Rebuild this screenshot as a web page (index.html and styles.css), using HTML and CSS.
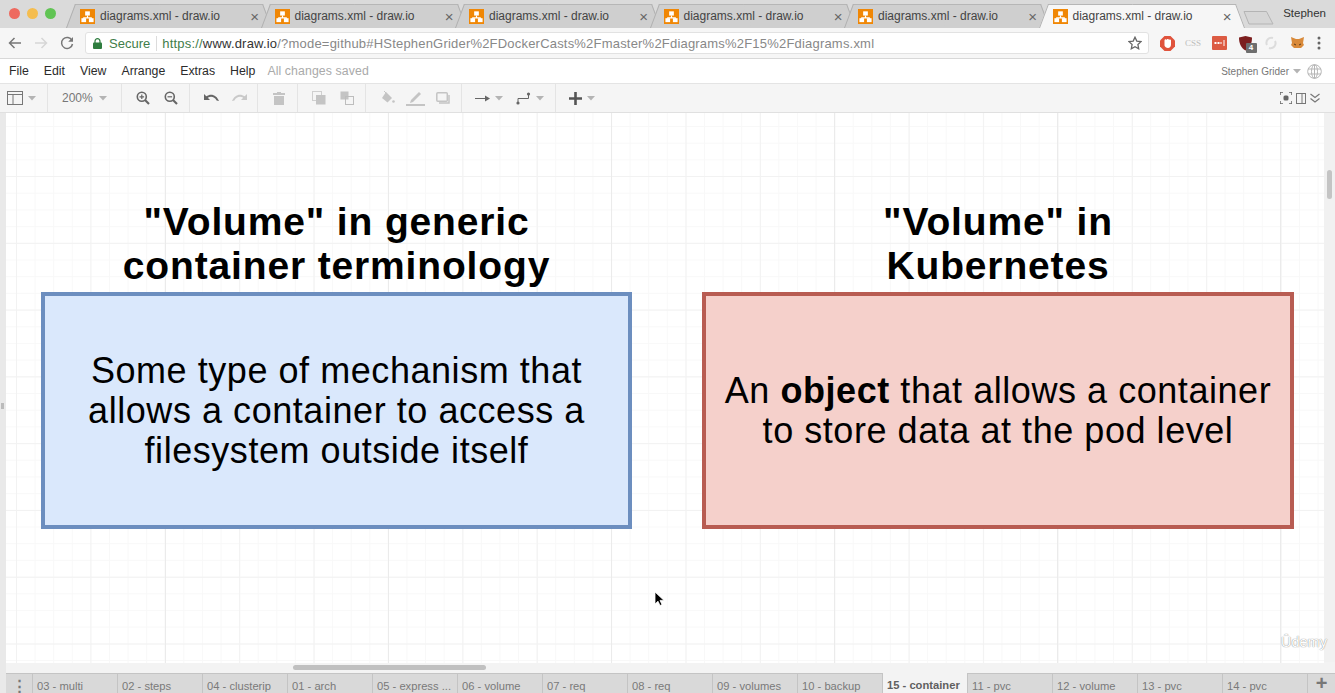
FILE: index.html
```html
<!DOCTYPE html>
<html lang="en">
<head>
  <meta charset="UTF-8" />
  <title>diagrams.xml - draw.io</title>
  <link rel="stylesheet" href="styles.css">
</head>
<body>

  <svg class="defs" width="0" height="0">
    <symbol id="logo" viewBox="0 0 16 16">
      <rect width="16" height="16" fill="#f08705"/>
      <path d="M8 7v2.500M4 11V9.500h8V11" fill="none" stroke="#fff" stroke-width="1.200"/>
      <rect x="5.500" y="2.500" width="5" height="4.500" fill="#fff"/>
      <rect x="1.500" y="9.800" width="5" height="4.200" fill="#fff"/>
      <rect x="9.500" y="9.800" width="5" height="4.200" fill="#fff"/>
    </symbol>
    <symbol id="caret" viewBox="0 0 8 5">
      <path d="M0 0h8L4 4.500z" fill="#b4b4b4"/>
    </symbol>
  </svg>

  <div class="tabstrip">
    <div class="traffic">
      <span class="light light-red"></span>
      <span class="light light-yellow"></span>
      <span class="light light-green"></span>
    </div>
    <div class="tab"><svg class="favicon"><use href="#logo"/></svg><span class="tab-title">diagrams.xml - draw.io</span><span class="tab-close">×</span></div>
    <div class="tab"><svg class="favicon"><use href="#logo"/></svg><span class="tab-title">diagrams.xml - draw.io</span><span class="tab-close">×</span></div>
    <div class="tab"><svg class="favicon"><use href="#logo"/></svg><span class="tab-title">diagrams.xml - draw.io</span><span class="tab-close">×</span></div>
    <div class="tab"><svg class="favicon"><use href="#logo"/></svg><span class="tab-title">diagrams.xml - draw.io</span><span class="tab-close">×</span></div>
    <div class="tab"><svg class="favicon"><use href="#logo"/></svg><span class="tab-title">diagrams.xml - draw.io</span><span class="tab-close">×</span></div>
    <div class="tab tab-active"><svg class="favicon"><use href="#logo"/></svg><span class="tab-title">diagrams.xml - draw.io</span><span class="tab-close">×</span></div>
    <svg class="newtab" width="32" height="15" viewBox="0 0 32 15"><path d="M1 1.500h22.500l6.500 12.500H6z" fill="#d6d6d6" stroke="#b4b4b4"/></svg>
    <span class="profile">Stephen</span>
  </div>

  <div class="navbar">
    <div class="nav-buttons">
      <svg width="14" height="12" viewBox="0 0 14 12"><path d="M13 6H2M6.500 1L1.500 6l5 5" fill="none" stroke="#777" stroke-width="1.500"/></svg>
      <svg width="14" height="12" viewBox="0 0 14 12"><path d="M1 6h11M7.500 1l5 5-5 5" fill="none" stroke="#d6d6d6" stroke-width="1.500"/></svg>
      <svg width="14" height="14" viewBox="0 0 14 14"><path d="M12 4.500A5.500 5.500 0 1 0 12.500 8" fill="none" stroke="#777" stroke-width="1.500"/><path d="M13 1v4.800H8.200z" fill="#777"/></svg>
    </div>
    <div class="address">
      <svg class="lock" width="9" height="11" viewBox="0 0 9 11"><path d="M2 5V3.200a2.500 2.500 0 0 1 5 0V5" fill="none" stroke="#2f7d3f" stroke-width="1.200"/><rect y="4.500" width="9" height="6.500" rx="1" fill="#2f7d3f"/></svg>
      <span class="secure">Secure</span>
      <span class="url"><span class="url-scheme">https://</span><span class="url-host">www.draw.io</span>/?mode=github#HStephenGrider%2FDockerCasts%2Fmaster%2Fdiagrams%2F15%2Fdiagrams.xml</span>
      <svg class="star" width="14" height="14" viewBox="0 0 14 14"><path d="M7 1.200l1.800 3.900 4.200.5-3.100 2.900.8 4.200L7 10.700l-3.700 2 .8-4.200L1 5.600l4.200-.5z" fill="none" stroke="#666" stroke-width="1.300"/></svg>
    </div>
    <div class="extensions">
      <svg width="15" height="15" viewBox="0 0 15 15"><path d="M4.500 0h6L15 4.500v6L10.500 15h-6L0 10.500v-6z" fill="#e0533c"/><path d="M4.500 4.500c0-1.500 2-1.500 2-.5 0-1.500 2.500-1.500 2.500 0 .5-.8 2-.5 2 .5v4c0 2-1.200 3.500-3 3.500S5 11 4.500 9.500z" fill="#fff"/></svg>
      <span class="ext-css">CSS</span>
      <svg width="15" height="14" viewBox="0 0 15 14"><rect width="15" height="14" rx="1" fill="#dc5b43"/><path d="M2.500 7h7" stroke="#fff" stroke-width="2" stroke-dasharray="2 1"/><path d="M12 4v6" stroke="#fff"/></svg>
      <span class="ext-shield">
        <svg width="13" height="15" viewBox="0 0 13 15"><path d="M0 1.500L6.500 0 13 1.500c0 6-2 10.500-6.500 13C2 12 0 7.500 0 1.500z" fill="#7c1f1f"/></svg>
        <span class="ext-badge">4</span>
      </span>
      <svg width="14" height="14" viewBox="0 0 14 14"><path d="M9 2a5 5 0 0 0-6 7M5 12a5 5 0 0 0 6-7" fill="none" stroke="#dcdcdc" stroke-width="2"/></svg>
      <svg width="13" height="12" viewBox="0 0 13 12"><path d="M0 0l5 2h3l5-2-1 6 1 2-3 3H3L0 8l1-2z" fill="#d98a3a"/><path d="M3 7l2 1M10 7L8 8" stroke="#5a3a1c"/></svg>
      <svg width="4" height="14" viewBox="0 0 4 14"><circle cx="2" cy="2" r="1.500" fill="#666"/><circle cx="2" cy="7" r="1.500" fill="#666"/><circle cx="2" cy="12" r="1.500" fill="#666"/></svg>
    </div>
  </div>

  <div class="menubar">
    <span class="menu-item">File</span>
    <span class="menu-item">Edit</span>
    <span class="menu-item">View</span>
    <span class="menu-item">Arrange</span>
    <span class="menu-item">Extras</span>
    <span class="menu-item">Help</span>
    <span class="menu-status">All changes saved</span>
    <span class="menu-user">Stephen Grider</span>
    <svg class="user-caret" width="8" height="5"><use href="#caret"/></svg>
    <svg class="globe" width="15" height="15" viewBox="0 0 15 15"><g fill="none" stroke="#b5b5b5"><circle cx="7.500" cy="7.500" r="6.800"/><ellipse cx="7.500" cy="7.500" rx="3" ry="6.800"/><path d="M1 5h13M1 10h13M7.500 1v13"/></g></svg>
  </div>

  <div class="toolbar">
    <div class="tb-group tb-format">
      <svg width="16" height="14" viewBox="0 0 16 14"><rect x=".5" y=".5" width="15" height="13" fill="none" stroke="#777"/><path d="M.5 3.500h15M6 3.500v10" stroke="#777"/></svg>
      <svg class="tb-caret" width="8" height="5"><use href="#caret"/></svg>
    </div>
    <div class="tb-group tb-zoom">
      <span class="zoom-value">200%</span>
      <svg class="tb-caret" width="8" height="5"><use href="#caret"/></svg>
    </div>
    <div class="tb-group">
      <span class="tb-btn"><svg width="14" height="14" viewBox="0 0 14 14"><circle cx="5.800" cy="5.800" r="4.500" fill="none" stroke="#666" stroke-width="1.600"/><path d="M9 9l4 4" stroke="#666" stroke-width="2.200"/><path d="M3.500 5.800h4.600M5.800 3.500v4.600" stroke="#666" stroke-width="1.200"/></svg></span>
      <span class="tb-btn"><svg width="14" height="14" viewBox="0 0 14 14"><circle cx="5.800" cy="5.800" r="4.500" fill="none" stroke="#666" stroke-width="1.600"/><path d="M9 9l4 4" stroke="#666" stroke-width="2.200"/><path d="M3.500 5.800h4.600" stroke="#666" stroke-width="1.200"/></svg></span>
    </div>
    <div class="tb-group">
      <span class="tb-btn"><svg width="15" height="9" viewBox="0 0 15 9"><path d="M0 0v6h6L3.800 3.800C6.800 1.800 10.500 2.600 12.600 6.500L15 7C12.800 1 7 -1.200 2.300 2.300z" fill="#666"/></svg></span>
      <span class="tb-btn"><svg width="15" height="9" viewBox="0 0 15 9"><path d="M15 0v6H9l2.200-2.200C8.200 1.800 4.500 2.600 2.400 6.500L0 7C2.200 1 8-1.200 12.700 2.300z" fill="#c9c9c9"/></svg></span>
    </div>
    <div class="tb-group">
      <span class="tb-btn"><svg width="12" height="13" viewBox="0 0 12 13"><path d="M0 1h4V0h4v1h4v2H0zM1 4h10v9H1z" fill="#c4c4c4"/></svg></span>
    </div>
    <div class="tb-group">
      <span class="tb-btn"><svg width="14" height="14" viewBox="0 0 14 14"><rect x=".5" y=".5" width="9" height="9" fill="none" stroke="#cfcfcf"/><rect x="4" y="4" width="9.500" height="9.500" fill="#c4c4c4"/></svg></span>
      <span class="tb-btn"><svg width="14" height="14" viewBox="0 0 14 14"><rect x=".5" y=".5" width="8" height="8" fill="#c4c4c4"/><rect x="5.500" y="5.500" width="8" height="8" fill="none" stroke="#bdbdbd"/></svg></span>
    </div>
    <div class="tb-group">
      <span class="tb-btn"><svg width="15" height="14" viewBox="0 0 15 14"><path d="M6 1l6 6-4.500 4.500L2 7z" fill="#c4c4c4"/><path d="M4 0l3 3" stroke="#c4c4c4"/><circle cx="13.500" cy="10.500" r="1.300" fill="#c4c4c4"/></svg></span>
      <span class="tb-btn"><svg width="19" height="16" viewBox="0 0 19 16"><path d="M5 10l8-8 2 2-8 8-3 1z" fill="#c4c4c4"/><path d="M0 15h19" stroke="#c4c4c4" stroke-width="2"/></svg></span>
      <span class="tb-btn"><svg width="14" height="12" viewBox="0 0 14 12"><rect x=".8" y=".8" width="10.500" height="8.500" rx="1" fill="none" stroke="#c4c4c4" stroke-width="1.500"/><path d="M13 3v8H3" fill="none" stroke="#c4c4c4" stroke-width="1.500"/></svg></span>
    </div>
    <div class="tb-group tb-lines">
      <svg width="15" height="7" viewBox="0 0 15 7"><path d="M0 3.500h11" stroke="#666"/><path d="M10 .5l5 3-5 3z" fill="#666"/></svg>
      <svg class="tb-caret" width="8" height="5"><use href="#caret"/></svg>
      <svg class="tb-waypoint" width="15" height="13" viewBox="0 0 15 13"><path d="M2 11V6.500h10.500V2" fill="none" stroke="#666"/><circle cx="2" cy="11" r="1.600" fill="#666"/><circle cx="12.500" cy="2" r="1.600" fill="#666"/></svg>
      <svg class="tb-caret" width="8" height="5"><use href="#caret"/></svg>
    </div>
    <div class="tb-group tb-insert">
      <svg width="13" height="13" viewBox="0 0 13 13"><path d="M6.500 0v13M0 6.500h13" stroke="#555" stroke-width="2.600"/></svg>
      <svg class="tb-caret" width="8" height="5"><use href="#caret"/></svg>
    </div>
    <div class="tb-right">
      <svg width="12" height="12" viewBox="0 0 12 12"><path d="M0 3V0h3M9 0h3v3M12 9v3H9M3 12H0V9" fill="none" stroke="#666" stroke-width="1.500"/><rect x="3.500" y="3.500" width="5" height="5" rx="1.500" fill="#666"/></svg>
      <svg width="10" height="11" viewBox="0 0 10 11"><rect x=".5" y=".5" width="9" height="10" fill="none" stroke="#777"/><path d="M6 .5v10" stroke="#777"/></svg>
      <svg width="10" height="10" viewBox="0 0 10 10"><path d="M.5 1l4.500 3.500L9.500 1M.5 5.500L5 9l4.500-3.500" fill="none" stroke="#777" stroke-width="1.200"/></svg>
    </div>
  </div>

  <div class="workspace">
    <div class="gutter"><span class="gutter-handle"></span></div>
    <div class="canvas">
      <h2 class="node-title title-left">"Volume" in generic<br>container terminology</h2>
      <h2 class="node-title title-right">"Volume" in<br>Kubernetes</h2>
      <div class="node node-blue">Some type of mechanism that<br>allows a container to access a<br>filesystem outside itself</div>
      <div class="node node-red"><span>An <b>object</b> that allows a container<br>to store data at the pod level</span></div>
      <svg class="cursor" width="11" height="16" viewBox="0 0 11 16"><path d="M1 1v12l3-2.800 2 4.300 2-.9-2-4.200h4z" fill="#000" stroke="#fff" stroke-width=".8"/></svg>
      <span class="watermark">Ûdemy</span>
    </div>
    <div class="vscroll"><span class="vscroll-thumb"></span></div>
  </div>

  <div class="hscroll"><span class="hscroll-thumb"></span></div>

  <div class="pages">
    <div class="page-menu">⋮</div>
    <div class="page">03 - multi</div>
    <div class="page">02 - steps</div>
    <div class="page">04 - clusterip</div>
    <div class="page">01 - arch</div>
    <div class="page">05 - express ...</div>
    <div class="page">06 - volume</div>
    <div class="page">07 - req</div>
    <div class="page">08 - req</div>
    <div class="page">09 - volumes</div>
    <div class="page">10 - backup</div>
    <div class="page page-active">15 - container</div>
    <div class="page">11 - pvc</div>
    <div class="page">12 - volume</div>
    <div class="page">13 - pvc</div>
    <div class="page">14 - pvc</div>
    <div class="page-add">+</div>
  </div>

</body>
</html>
```

FILE: styles.css
```css
* {
  box-sizing: border-box;
}
html, body {
  margin: 0;
  height: 100%;
  overflow: hidden;
}
body {
  display: flex;
  flex-direction: column;
  font-family: "Liberation Sans", Arial, sans-serif;
  color: #333;
  background: #fff;
}
svg {
  display: block;
  flex: none;
}
.defs {
  position: absolute;
}

/* browser tabs */
.tabstrip {
  display: flex;
  align-items: flex-end;
  height: 28px;
  background: #dadada;
  flex: none;
}
.traffic {
  display: flex;
  align-self: flex-start;
  width: 66px;
  padding: 8px 0 0 9px;
  gap: 7px;
  flex: none;
}
.light {
  width: 11px;
  height: 11px;
  border-radius: 50%;
}
.light-red {
  background: #ee6a5f;
}
.light-yellow {
  background: #f5bd4f;
}
.light-green {
  background: #61c454;
}
.tab {
  position: relative;
  display: flex;
  align-items: center;
  width: 206px;
  height: 24px;
  margin-right: -11.5px;
  padding: 0 13px 0 14px;
  font-size: 12px;
  color: #444;
}
.tab::before,
.tab::after {
  content: "";
  position: absolute;
  top: 0;
  bottom: 0;
  width: 50%;
  background: #cfcfcf;
  border-top: 1px solid #b6b6b6;
}
.tab::before {
  left: 0;
  transform-origin: bottom left;
  transform: skewX(-20.5deg);
  border-left: 1px solid #b0b0b0;
}
.tab::after {
  right: 0;
  transform-origin: bottom right;
  transform: skewX(20.5deg);
  border-right: 1px solid #b0b0b0;
}
.tab-active {
  z-index: 2;
}
.tab-active::before,
.tab-active::after {
  background: #f6f6f6;
}
.favicon {
  position: relative;
  z-index: 1;
  width: 15px;
  height: 15px;
}
.tab-title {
  position: relative;
  z-index: 1;
  margin-left: 5px;
  flex: 1;
  white-space: nowrap;
}
.tab-close {
  position: relative;
  z-index: 1;
  font-size: 15px;
  color: #666;
}
.newtab {
  margin: 0 0 3px 10px;
}
.profile {
  align-self: flex-start;
  margin: 7px 0 0 auto;
  padding-right: 9px;
  font-size: 11.5px;
  color: #333;
}

/* address bar */
.navbar {
  display: flex;
  align-items: center;
  height: 31px;
  background: #f6f6f6;
  border-bottom: 1px solid #d8d8d8;
  flex: none;
}
.nav-buttons {
  display: flex;
  align-items: center;
  width: 85px;
  padding-left: 8px;
  gap: 12px;
}
.address {
  display: flex;
  align-items: center;
  width: 1064px;
  height: 22px;
  padding: 0 6px 0 7px;
  background: #fff;
  border: 1px solid #e2e2e2;
  border-radius: 3px;
  font-size: 13px;
  white-space: nowrap;
}
.secure {
  margin-left: 7px;
  padding-right: 6px;
  border-right: 1px solid #dcdcdc;
  color: #3f7d4a;
}
.url {
  margin-left: 5px;
  letter-spacing: .2px;
  color: #888;
  flex: 1;
}
.url-scheme {
  color: #3f7d4a;
}
.url-host {
  color: #333;
}
.extensions {
  display: grid;
  grid-template-columns: repeat(6, 26px) 18px;
  justify-items: center;
  align-items: center;
  padding-left: 5px;
}
.ext-css {
  font-family: "Liberation Serif", serif;
  font-size: 9px;
  color: #bdbdbd;
}
.ext-shield {
  position: relative;
}
.ext-badge {
  position: absolute;
  left: 7px;
  top: 7px;
  width: 11px;
  height: 10px;
  background: #6e6e6e;
  border-radius: 1px;
  color: #fff;
  font-size: 8px;
  line-height: 10px;
  font-weight: bold;
  text-align: center;
}

/* draw.io menu */
.menubar {
  display: flex;
  align-items: center;
  height: 25px;
  padding: 0 13px 0 9px;
  gap: 15px;
  border-bottom: 1px solid #e4e4e4;
  font-size: 12.3px;
  flex: none;
}
.menu-item {
  color: #2b2b2b;
}
.menu-status {
  margin-left: -3px;
  letter-spacing: .1px;
  color: #aaa;
}
.menu-user {
  margin-left: auto;
  margin-right: -11px;
  font-size: 10px;
  color: #777;
}
.globe {
  margin-left: -9px;
}

/* draw.io toolbar */
.toolbar {
  display: flex;
  height: 29px;
  background: #f5f5f5;
  border-bottom: 1px solid #e0e0e0;
  flex: none;
}
.tb-group {
  display: flex;
  align-items: center;
  padding: 0 4px 0 7px;
  border-right: 1px solid #e4e4e4;
}
.tb-btn {
  display: flex;
  align-items: center;
  justify-content: center;
  width: 28px;
}
.tb-caret {
  margin-left: 5px;
}
.tb-format {
  width: 48px;
}
.tb-zoom {
  width: 74px;
  padding-left: 14px;
}
.zoom-value {
  font-size: 12px;
  color: #777;
}
.zoom-value + .tb-caret {
  margin-left: 6px;
}
.tb-lines {
  width: 94px;
  padding-left: 13px;
}
.tb-waypoint {
  margin-left: 13px;
}
.tb-insert {
  width: 58px;
  padding-left: 13px;
  border-right: 0;
}
.tb-right {
  display: flex;
  align-items: center;
  margin-left: auto;
  padding-right: 15px;
  gap: 4px;
}

/* drawing area */
.workspace {
  display: flex;
  flex: 1;
  min-height: 0;
}
.gutter {
  position: relative;
  width: 6px;
  background: #e9e9e9;
}
.gutter-handle {
  position: absolute;
  left: 1px;
  top: 290px;
  width: 3px;
  height: 6px;
  background: #bbb;
}
.canvas {
  position: relative;
  flex: 1;
  background-color: #fff;
  background-image:
    linear-gradient(to right, #ebebeb 1px, transparent 1px),
    linear-gradient(to right, #f2f2f2 1px, transparent 1px),
    linear-gradient(to bottom, #f2f2f2 1px, transparent 1px),
    linear-gradient(to right, #f8f8f8 1px, transparent 1px),
    linear-gradient(to bottom, #f8f8f8 1px, transparent 1px);
  background-size: 223px 100%, 74.4px 100%, 100% 66.8px, 18.6px 100%, 100% 16.7px;
  background-position: 159px 0, 10px 0, 0 63px, 10px 0, 0 13px;
}
.vscroll {
  width: 11px;
  padding: 57px 3px 0;
  background: #f1f1f1;
}
.vscroll-thumb {
  display: block;
  height: 29px;
  background: #c4c4c4;
  border-radius: 3px;
}
.hscroll {
  height: 11px;
  padding: 3px 0 0 293px;
  background: #f3f3f3;
  border-left: 6px solid #e9e9e9;
  flex: none;
  margin-top: -1px;
}
.hscroll-thumb {
  display: block;
  width: 193px;
  height: 5px;
  margin-left: -6px;
  background: #c0c0c0;
  border-radius: 3px;
}

/* diagram nodes, placed on the canvas */
.node-title {
  position: absolute;
  top: 87px;
  margin: 0;
  font-size: 39px;
  letter-spacing: .85px;
  line-height: 43.5px;
  font-weight: bold;
  color: #000;
  text-align: center;
  white-space: nowrap;
}
.title-left {
  left: 35px;
  width: 591px;
}
.title-right {
  left: 696px;
  width: 592px;
}
.node {
  position: absolute;
  top: 179px;
  height: 237px;
  display: flex;
  align-items: center;
  justify-content: center;
  border-width: 4px;
  border-style: solid;
  color: #000;
  font-size: 36px;
  letter-spacing: .55px;
  line-height: 40px;
  text-align: center;
  white-space: nowrap;
}
.node-blue {
  left: 35px;
  width: 591px;
  background: #dae8fc;
  border-color: #6c8ebf;
}
.node-red {
  left: 696px;
  width: 592px;
  background: #f5d0cb;
  border-color: #b85c52;
}
.cursor {
  position: absolute;
  left: 648px;
  top: 478px;
}
.watermark {
  position: absolute;
  left: 1275px;
  top: 521px;
  font-size: 14.5px;
  color: #fff;
  text-shadow: 0 0 1px #999, 0 0 1px #999;
}

/* page tabs */
.pages {
  display: flex;
  height: 20px;
  padding-left: 6px;
  background: #e9e9e9;
  flex: none;
  font-size: 11.2px;
  color: #7a7a7a;
}
.page,
.page-menu,
.page-add {
  display: flex;
  align-items: center;
  flex: none;
  background: #d9d9d9;
  border-top: 1px solid #c4c4c4;
  border-right: 1px solid #c4c4c4;
  white-space: nowrap;
}
.page {
  width: 85px;
  padding: 4px 0 0 4px;
}
.page-menu {
  justify-content: center;
  width: 27px;
  padding-top: 4px;
  font-size: 15px;
  font-weight: bold;
  color: #777;
}
.page-active {
  background: #f3f3f3;
  border-top: 0;
  font-weight: bold;
  color: #5f5f5f;
}
.page-add {
  justify-content: center;
  flex: 1;
  border-right: 0;
  font-size: 20px;
  font-weight: bold;
  color: #777;
}
```
